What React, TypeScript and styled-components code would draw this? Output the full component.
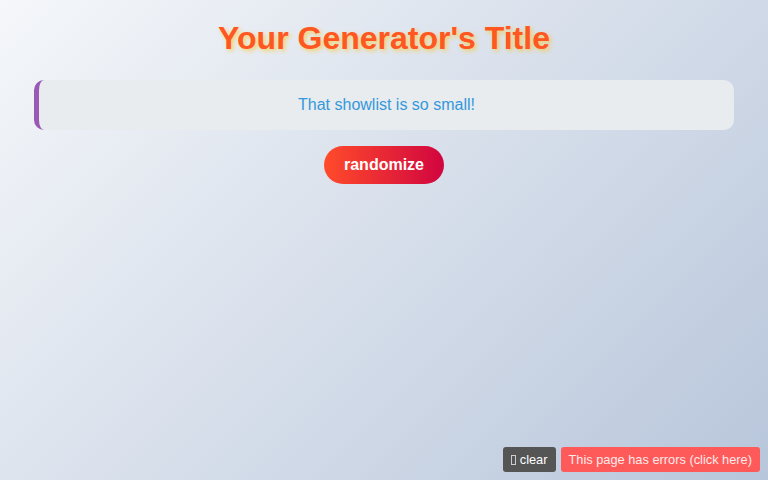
import React from 'react'
import styled, { createGlobalStyle } from 'styled-components'

const GlobalStyle = createGlobalStyle`
  html, body {
    margin: 0;
    padding: 0;
  }
  body {
    min-height: 100vh;
    font-family: "Liberation Sans", Arial, sans-serif;
    background: linear-gradient(135deg, #f5f7fa 0%, #b8c6db 100%);
    background-attachment: fixed;
  }
`

const App = () => {
  return (
    <>
      <GlobalStyle />
      <Page>
        <Title>Your Generator's Title</Title>
        <Output>That showlist is so small!</Output>
        <RandomButton>randomize</RandomButton>
      </Page>
      <ErrorBar>
        <ClearButton>
          <Tofu /> clear
        </ClearButton>
        <ErrorNotice>This page has errors (click here)</ErrorNotice>
      </ErrorBar>
    </>
  )
}

export default App

const Page = styled.div`
  max-width: 700px;
  margin: 0 auto;
  padding-top: 20px;
  display: flex;
  flex-direction: column;
  align-items: center;
`

const Title = styled.h1`
  margin: 0 0 23px;
  font-size: 32px;
  font-weight: bold;
  color: #ff5722;
  text-shadow: 2px 2px 4px rgba(255, 193, 7, 0.6);
  text-align: center;
`

const Output = styled.div`
  box-sizing: border-box;
  width: 100%;
  padding: 16px;
  background: #e8ecef;
  border-left: 5px solid #9b59b6;
  border-radius: 10px;
  color: #3498db;
  font-size: 16px;
  text-align: center;
`

const RandomButton = styled.button`
  margin-top: 16px;
  padding: 10px 20px;
  border: none;
  border-radius: 25px;
  background: linear-gradient(to right, #ff4b2b, #d1053f);
  color: #fff;
  font-family: "Liberation Sans", Arial, sans-serif;
  font-size: 16px;
  font-weight: bold;
  cursor: pointer;
`

const ErrorBar = styled.div`
  position: fixed;
  right: 8px;
  bottom: 8px;
  display: flex;
  gap: 5px;
`

const BarButton = styled.div`
  height: 25px;
  padding: 0 8px;
  display: flex;
  align-items: center;
  border-radius: 3px;
  color: #fff;
  font-size: 12.8px;
  font-family: "Liberation Sans", Arial, sans-serif;
  white-space: pre;
`

const ClearButton = styled(BarButton)`
  background: #555;
`

const ErrorNotice = styled(BarButton)`
  background: #ff5a5a;
  color: #fdeaea;
`

const Tofu = styled.span`
  display: inline-block;
  box-sizing: border-box;
  width: 5px;
  height: 10px;
  border: 1px solid #ccc;
`
